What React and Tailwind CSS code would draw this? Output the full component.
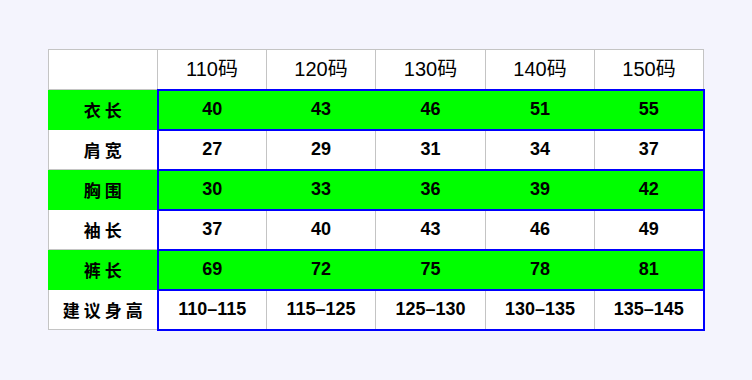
import React from 'react';

const sizes = ['110码', '120码', '130码', '140码', '150码'];

const rows = [
  { label: '衣长', values: ['40', '43', '46', '51', '55'], green: true },
  { label: '肩宽', values: ['27', '29', '31', '34', '37'], green: false },
  { label: '胸围', values: ['30', '33', '36', '39', '42'], green: true },
  { label: '袖长', values: ['37', '40', '43', '46', '49'], green: false },
  { label: '裤长', values: ['69', '72', '75', '78', '81'], green: true },
  { label: '建议身高', values: ['110-115', '115-125', '125-130', '130-135', '135-145'], green: false },
];

const numFont = { fontFamily: '"Liberation Sans", "Noto Sans CJK SC", sans-serif' };
const cjkFont = { fontFamily: '"Noto Sans CJK SC", "Liberation Sans", sans-serif' };

const SizeTable = () => {
  return (
    <table className="border-collapse table-fixed w-[655px]">
      <colgroup>
        <col className="w-[109px]" />
        <col className="w-[109px]" />
        <col className="w-[109px]" />
        <col className="w-[110px]" />
        <col className="w-[109px]" />
        <col className="w-[109px]" />
      </colgroup>
      <thead>
        <tr className="h-[40px] bg-white">
          <th className="border border-[#c4c4c4]"></th>
          {sizes.map((s) => (
            <th key={s} className="border border-[#c4c4c4] text-[20px] font-normal text-black text-center" style={numFont}>
              {s}
            </th>
          ))}
        </tr>
      </thead>
      <tbody>
        {rows.map((row) => {
          const inner = row.green ? 'border-[#00ff00]' : 'border-[#c4c4c4]';
          return (
            <tr key={row.label} className={row.green ? 'h-[40px] bg-[#00ff00]' : 'h-[40px] bg-white'}>
              <td
                className={'border text-center text-[17px] font-bold text-black tracking-[4px] ' + inner}
                style={cjkFont}
              >
                <span className="pl-[4px]">{row.label}</span>
              </td>
              {row.values.map((v, i) => (
                <td
                  key={i}
                  className={
                    'text-center text-[18px] font-bold text-black border-y-2 border-y-[#0000ff] ' +
                    (i === 0
                      ? 'border-l-2 border-l-[#0000ff] '
                      : row.green
                      ? 'border-l border-l-[#00ff00] '
                      : 'border-l border-l-[#c4c4c4] ') +
                    (i === 4
                      ? 'border-r-2 border-r-[#0000ff]'
                      : row.green
                      ? 'border-r border-r-[#00ff00]'
                      : 'border-r border-r-[#c4c4c4]')
                  }
                  style={numFont}
                >
                  {v.replace('-', '–')}
                </td>
              ))}
            </tr>
          );
        })}
      </tbody>
    </table>
  );
};

export default function App() {
  return (
    <div className="w-[752px] h-[380px] bg-[#f4f4fd] pt-[49px] pl-[48px]">
      <SizeTable />
    </div>
  );
}
